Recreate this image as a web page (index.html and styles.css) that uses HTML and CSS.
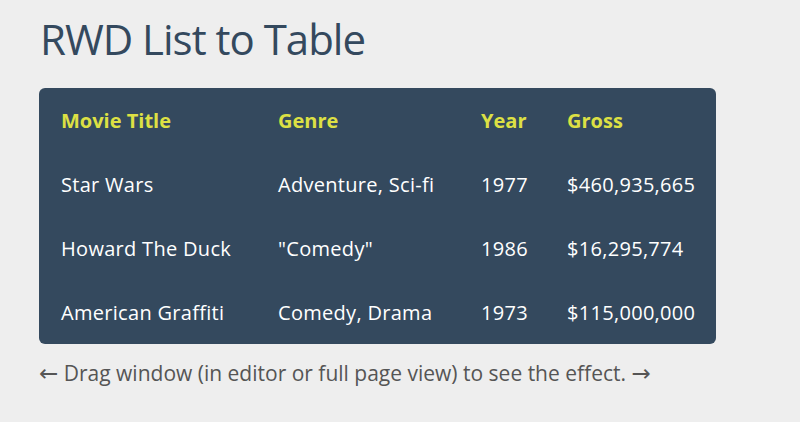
FILE: index.html
```html
<!DOCTYPE html>
<html>
<head>
<meta charset="utf-8">
<link rel="stylesheet" href="styles.css">
</head>
<body>
<h1 class="title">RWD List to Table</h1>
<table class="rwd-table">
  <colgroup>
    <col class="c1"><col class="c2"><col class="c3"><col class="c4">
  </colgroup>
  <tr class="head">
    <th>Movie Title</th>
    <th>Genre</th>
    <th>Year</th>
    <th>Gross</th>
  </tr>
  <tr>
    <td>Star Wars</td>
    <td>Adventure, Sci-fi</td>
    <td>1977</td>
    <td>$460,935,665</td>
  </tr>
  <tr>
    <td>Howard The Duck</td>
    <td>"Comedy"</td>
    <td>1986</td>
    <td>$16,295,774</td>
  </tr>
  <tr>
    <td>American Graffiti</td>
    <td>Comedy, Drama</td>
    <td>1973</td>
    <td>$115,000,000</td>
  </tr>
</table>
<p class="note"><span class="arrow">←</span> Drag window (in editor or full page view) to see the effect. <span class="arrow">→</span></p>
</body>
</html>
```
FILE: styles.css
```css
html, body {
  margin: 0;
  padding: 0;
}
body {
  background: #eeeeee;
  color: #444;
  font-family: "Open Sans", "Noto Sans", sans-serif;
  padding: 12px 39px;
}
.title {
  margin: 0 0 22px 1px;
  font-weight: 400;
  font-size: 42px;
  line-height: 54px;
  letter-spacing: -1px;
  color: #34495e;
}
.rwd-table {
  border-collapse: separate;
  border-spacing: 0;
  width: 677px;
  table-layout: fixed;
  background: #34495e;
  color: #fff;
  border-radius: 6px;
  overflow: hidden;
}
.c1 { width: 217px; }
.c2 { width: 203px; }
.c3 { width: 86px; }
.c4 { width: 171px; }
.rwd-table th,
.rwd-table td {
  height: 64px;
  padding: 0 0 0 22px;
  text-align: left;
  font-size: 20px;
  white-space: nowrap;
}
.rwd-table th {
  color: #dde044;
  font-weight: 700;
}
.rwd-table td {
  font-weight: 400;
  letter-spacing: 0.3px;
}
.note {
  margin: 15px 0 0 0;
  font-size: 21px;
  letter-spacing: 0;
  color: #555;
}
.arrow {
  font-family: "DejaVu Sans", sans-serif;
  font-size: 23px;
}
```
